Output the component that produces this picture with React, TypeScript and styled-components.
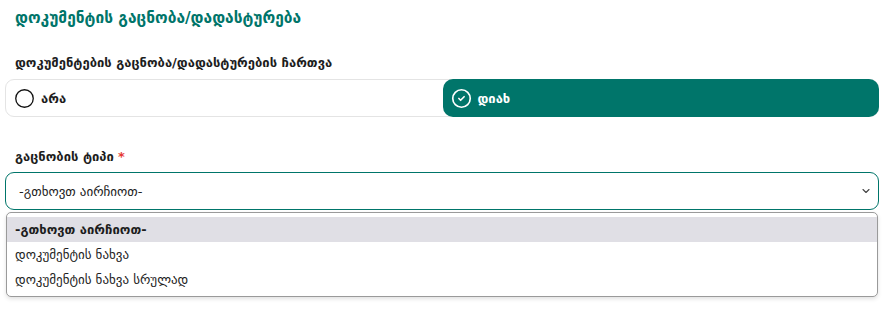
import React from "react";
import styled, { createGlobalStyle } from "styled-components";
import { Circle, CircleCheck, ChevronDown } from "lucide-react";

const Global = createGlobalStyle`
  html, body { margin: 0; padding: 0; background: #fff; height: 100%; }
  #root { min-height: 100%; }
  body { font-family: "DejaVu Sans", "Noto Sans", sans-serif; color: #1d1d1d; }
`;

const TEAL = "#00756a";

const Page = styled.div`
  padding: 8px 9px 0 5px;
  min-height: 311px;
  box-sizing: border-box;
  display: flex;
  flex-direction: column;
`;

const Title = styled.h1`
  margin: 0 0 0 10px;
  font-size: 15.5px;
  line-height: 20px;
  font-weight: 700;
  color: ${TEAL};
`;

const Label = styled.div<{ $top: number }>`
  margin: ${(p) => p.$top}px 0 7px 10px;
  font-size: 13px;
  line-height: 18px;
  font-weight: 600;
  color: #1d1d1d;
`;

const Star = styled.span`
  color: #e53935;
  margin-left: 4px;
`;

const RadioGroup = styled.div`
  display: flex;
  height: 38px;
  border: 1px solid #e4e4e4;
  border-radius: 9px;
  box-sizing: border-box;
`;

const Option = styled.div<{ $active?: boolean }>`
  flex: 1;
  display: flex;
  align-items: center;
  gap: 6px;
  padding-left: 8px;
  margin: -1px ${(p) => (p.$active ? "-1px" : "0")} -1px 0;
  border-radius: 10px;
  background: ${(p) => (p.$active ? TEAL : "transparent")};
  color: ${(p) => (p.$active ? "#fff" : "#1d1d1d")};
  font-size: 13px;
  font-weight: 700;
`;

const SelectWrap = styled.div`
  position: relative;
  margin-top: -1px;
`;

const SelectBox = styled.div`
  height: 38px;
  box-sizing: border-box;
  border: 1px solid ${TEAL};
  border-radius: 9px;
  display: flex;
  align-items: center;
  justify-content: space-between;
  padding: 0 6px 0 13px;
  font-size: 13px;
  color: #222;
`;

const Menu = styled.ul`
  position: absolute;
  z-index: 10;
  left: 1px;
  right: 1px;
  top: 40px;
  margin: 0;
  padding: 4px 0;
  list-style: none;
  background: #fff;
  border: 1px solid #9a9a9a;
  border-radius: 5px;
  box-shadow: 0 2px 4px rgba(0, 0, 0, 0.12);
`;

const Item = styled.li<{ $selected?: boolean }>`
  height: 25px;
  display: flex;
  align-items: center;
  padding-left: 8px;
  font-size: 13px;
  color: #1d1d1d;
  font-weight: ${(p) => (p.$selected ? 700 : 400)};
  background: ${(p) => (p.$selected ? "#e0dfe5" : "transparent")};
`;

export default function App() {
  return (
    <>
      <Global />
      <Page>
        <Title>დოკუმენტის გაცნობა/დადასტურება</Title>
        <Label $top={26}>დოკუმენტების გაცნობა/დადასტურების ჩართვა</Label>
        <RadioGroup>
          <Option>
            <Circle size={21} strokeWidth={1.5} color="#111" />
            <span>არა</span>
          </Option>
          <Option $active>
            <CircleCheck size={21} strokeWidth={1.9} color="#fff" />
            <span>დიახ</span>
          </Option>
        </RadioGroup>
        <Label $top={31}>
          გაცნობის ტიპი<Star>*</Star>
        </Label>
        <SelectWrap>
          <SelectBox>
            <span>-გთხოვთ აირჩიოთ-</span>
            <ChevronDown size={12} strokeWidth={2.2} color="#444" />
          </SelectBox>
          <Menu>
            <Item $selected>-გთხოვთ აირჩიოთ-</Item>
            <Item>დოკუმენტის ნახვა</Item>
            <Item>დოკუმენტის ნახვა სრულად</Item>
          </Menu>
        </SelectWrap>
      </Page>
    </>
  );
}
